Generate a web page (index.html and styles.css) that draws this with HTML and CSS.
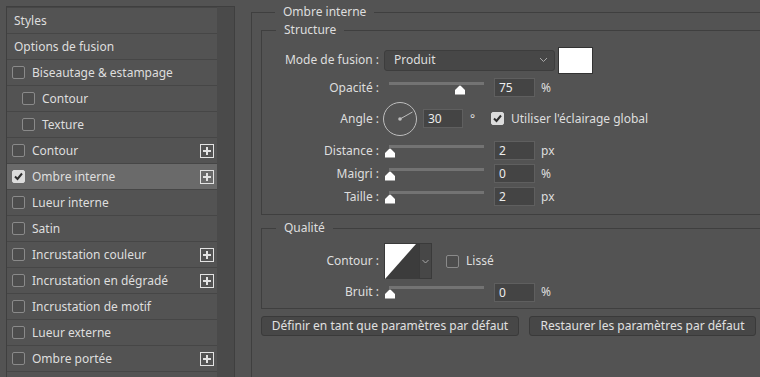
FILE: index.html
```html
<!DOCTYPE html>
<html>
<head>
    <meta charset="UTF-8">
    <title>Style de calque</title>
    <link rel="stylesheet" href="styles.css">
</head>
<body>
<div class="dialog">
    <aside class="sidebar">
        <ul class="styles-list">
            <li class="item heading">Styles</li>
            <li class="item heading">Options de fusion</li>
            <li class="item"><span class="box"></span>Biseautage &amp; estampage</li>
            <li class="item sub"><span class="box"></span>Contour</li>
            <li class="item sub"><span class="box"></span>Texture</li>
            <li class="item"><span class="box"></span>Contour
                <svg class="add" width="14" height="14" viewBox="0 0 14 14"><rect x="0.5" y="0.5" width="13" height="13" fill="none" stroke="#e2e2e2"/><rect x="3" y="6" width="8" height="2" fill="#e2e2e2"/><rect x="6" y="3" width="2" height="8" fill="#e2e2e2"/></svg></li>
            <li class="item active"><span class="box checked"><svg width="13" height="13" viewBox="0 0 13 13"><path d="M3 6.5 L5.5 9 L10 3.5" fill="none" stroke="#2e2e2e" stroke-width="2"/></svg></span>Ombre interne
                <svg class="add" width="14" height="14" viewBox="0 0 14 14"><rect x="0.5" y="0.5" width="13" height="13" fill="none" stroke="#e2e2e2"/><rect x="3" y="6" width="8" height="2" fill="#e2e2e2"/><rect x="6" y="3" width="2" height="8" fill="#e2e2e2"/></svg></li>
            <li class="item"><span class="box"></span>Lueur interne</li>
            <li class="item"><span class="box"></span>Satin</li>
            <li class="item"><span class="box"></span>Incrustation couleur
                <svg class="add" width="14" height="14" viewBox="0 0 14 14"><rect x="0.5" y="0.5" width="13" height="13" fill="none" stroke="#e2e2e2"/><rect x="3" y="6" width="8" height="2" fill="#e2e2e2"/><rect x="6" y="3" width="2" height="8" fill="#e2e2e2"/></svg></li>
            <li class="item"><span class="box"></span>Incrustation en dégradé
                <svg class="add" width="14" height="14" viewBox="0 0 14 14"><rect x="0.5" y="0.5" width="13" height="13" fill="none" stroke="#e2e2e2"/><rect x="3" y="6" width="8" height="2" fill="#e2e2e2"/><rect x="6" y="3" width="2" height="8" fill="#e2e2e2"/></svg></li>
            <li class="item"><span class="box"></span>Incrustation de motif</li>
            <li class="item"><span class="box"></span>Lueur externe</li>
            <li class="item"><span class="box"></span>Ombre portée
                <svg class="add" width="14" height="14" viewBox="0 0 14 14"><rect x="0.5" y="0.5" width="13" height="13" fill="none" stroke="#e2e2e2"/><rect x="3" y="6" width="8" height="2" fill="#e2e2e2"/><rect x="6" y="3" width="2" height="8" fill="#e2e2e2"/></svg></li>
        </ul>
        <div class="scrollbar"></div>
    </aside>

    <main class="settings">
        <fieldset class="group outer">
            <legend>Ombre interne</legend>

            <fieldset class="group structure">
                <legend>Structure</legend>

                <div class="row row-mode">
                    <span class="label">Mode de fusion :</span>
                    <div class="select">Produit
                        <svg class="chevron" width="9" height="6" viewBox="0 0 9 6"><path d="M1 1 L4.5 4.5 L8 1" fill="none" stroke="#a8a8a8"/></svg>
                    </div>
                    <div class="swatch"></div>
                </div>

                <div class="row row-slider row-opacity">
                    <span class="label">Opacité :</span>
                    <div class="slider"><div class="track"></div>
                        <svg class="thumb" style="left: 70px" width="12" height="10" viewBox="0 0 12 10"><path d="M6 0.5 Q6.6 0.5 7.2 1.2 L11 5 L11 9.5 L1 9.5 L1 5 L4.8 1.2 Q5.4 0.5 6 0.5 Z" fill="#fff"/></svg>
                    </div>
                    <div class="field">75</div>
                    <span class="unit">%</span>
                </div>

                <div class="row row-angle">
                    <span class="label">Angle :</span>
                    <svg class="dial" width="36" height="36" viewBox="0 0 36 36">
                        <circle cx="18" cy="18" r="16.5" fill="none" stroke="#bdbdbd"/>
                        <line x1="18" y1="18" x2="30.5" y2="11" stroke="#bdbdbd"/>
                        <circle cx="18" cy="18" r="1.8" fill="#bdbdbd"/>
                    </svg>
                    <div class="field field-angle">30</div>
                    <span class="unit degree">°</span>
                    <span class="box checked global"><svg width="13" height="13" viewBox="0 0 13 13"><path d="M3 6.5 L5.5 9 L10 3.5" fill="none" stroke="#2e2e2e" stroke-width="2"/></svg></span>
                    <span class="check-label">Utiliser l'éclairage global</span>
                </div>

                <div class="row row-slider">
                    <span class="label">Distance :</span>
                    <div class="slider"><div class="track"></div>
                        <svg class="thumb" style="left: 0px" width="12" height="10" viewBox="0 0 12 10"><path d="M6 0.5 Q6.6 0.5 7.2 1.2 L11 5 L11 9.5 L1 9.5 L1 5 L4.8 1.2 Q5.4 0.5 6 0.5 Z" fill="#fff"/></svg>
                    </div>
                    <div class="field">2</div>
                    <span class="unit">px</span>
                </div>

                <div class="row row-slider">
                    <span class="label">Maigri :</span>
                    <div class="slider"><div class="track"></div>
                        <svg class="thumb" style="left: 0px" width="12" height="10" viewBox="0 0 12 10"><path d="M6 0.5 Q6.6 0.5 7.2 1.2 L11 5 L11 9.5 L1 9.5 L1 5 L4.8 1.2 Q5.4 0.5 6 0.5 Z" fill="#fff"/></svg>
                    </div>
                    <div class="field">0</div>
                    <span class="unit">%</span>
                </div>

                <div class="row row-slider">
                    <span class="label">Taille :</span>
                    <div class="slider"><div class="track"></div>
                        <svg class="thumb" style="left: 0px" width="12" height="10" viewBox="0 0 12 10"><path d="M6 0.5 Q6.6 0.5 7.2 1.2 L11 5 L11 9.5 L1 9.5 L1 5 L4.8 1.2 Q5.4 0.5 6 0.5 Z" fill="#fff"/></svg>
                    </div>
                    <div class="field">2</div>
                    <span class="unit">px</span>
                </div>
            </fieldset>

            <fieldset class="group quality">
                <legend>Qualité</legend>

                <div class="row row-contour">
                    <span class="label">Contour :</span>
                    <div class="curve">
                        <svg width="34" height="35" viewBox="0 0 34 35"><rect width="34" height="35" fill="#3c3c3c"/><path d="M0 0 L31 0 L0 35 Z" fill="#fff"/></svg>
                        <span class="curve-drop"><svg width="7" height="5" viewBox="0 0 7 5"><path d="M0.5 1 L3.5 4 L6.5 1" fill="none" stroke="#a8a8a8"/></svg></span>
                    </div>
                    <span class="box smooth"></span>
                    <span class="check-label">Lissé</span>
                </div>

                <div class="row row-slider row-noise">
                    <span class="label">Bruit :</span>
                    <div class="slider"><div class="track"></div>
                        <svg class="thumb" style="left: 0px" width="12" height="10" viewBox="0 0 12 10"><path d="M6 0.5 Q6.6 0.5 7.2 1.2 L11 5 L11 9.5 L1 9.5 L1 5 L4.8 1.2 Q5.4 0.5 6 0.5 Z" fill="#fff"/></svg>
                    </div>
                    <div class="field">0</div>
                    <span class="unit">%</span>
                </div>
            </fieldset>

            <div class="actions">
                <button class="btn btn-default">Définir en tant que paramètres par défaut</button>
                <button class="btn btn-reset">Restaurer les paramètres par défaut</button>
            </div>
        </fieldset>
    </main>
</div>
</body>
</html>
```

FILE: styles.css
```css
* {
    box-sizing: border-box;
}
body {
    margin: 0;
    background-color: #535353;
    color: #dedede;
    font-family: "Noto Sans", sans-serif;
    font-size: 12px;
    line-height: 16px;
    overflow: hidden;
}
.dialog {
    display: flex;
    align-items: flex-start;
    padding: 4px 0 0 6px;
    height: 377px;
    overflow: hidden;
}

/* left list */
.sidebar {
    display: flex;
    width: 229px;
    height: 373px;
    margin-top: 2px;
    border: 1px solid #3f3f3f;
    border-bottom: none;
    flex-shrink: 0;
}
.styles-list {
    list-style: none;
    margin: 0;
    padding: 0;
    width: 210px;
    border-top: 1px solid #464646;
}
.item {
    display: flex;
    align-items: center;
    height: 26px;
    padding-left: 5px;
    border-bottom: 1px solid #464646;
}
.item.heading {
    padding-left: 7px;
}
.item.sub {
    padding-left: 15px;
}
.item.active {
    background-color: #6a6a6a;
}
.item .box {
    margin-right: 7px;
}
.add {
    margin-left: auto;
    margin-right: 3px;
}
.scrollbar {
    width: 17px;
    background-color: #4a4a4a;
}

/* checkbox */
.box {
    display: inline-flex;
    width: 13px;
    height: 13px;
    border: 1px solid #8a8a8a;
    border-radius: 2px;
    background-color: #4d4d4d;
    flex-shrink: 0;
}
.box.checked {
    background-color: #dcdcdc;
    border-color: #dcdcdc;
}
.box.checked svg {
    margin: -1px;
}

/* right settings */
.settings {
    flex: 1;
    margin-left: 16px;
}
.group {
    margin: 0;
    min-width: 0;
    border: 1px solid #3f3f3f;
    border-right: none;
}
.group legend {
    margin-left: 14px;
    padding: 0 8px;
    line-height: 16px;
}
.outer {
    height: 380px;
    border-bottom: none;
    padding: 2px 0 0 9px;
}
.structure {
    padding: 8px 0 6px 0;
}
.quality {
    margin-top: 5px;
    padding: 7px 0 6px 0;
}

.row {
    display: flex;
    align-items: center;
}
.label {
    width: 117px;
    margin-right: 5px;
    text-align: right;
    flex-shrink: 0;
}
.row-mode {
    height: 28px;
}
.row-slider {
    height: 23px;
}
.row-slider.row-opacity {
    height: 27px;
}
.row-angle {
    height: 35px;
    margin-bottom: 3px;
}
.row-contour {
    height: 36px;
    margin-bottom: 3px;
}
.row-slider.row-noise {
    height: 20px;
}

.select {
    display: flex;
    align-items: center;
    width: 171px;
    height: 21px;
    padding: 0 6px 0 9px;
    background-color: #474747;
    border: 1px solid #3d3d3d;
    border-radius: 3px;
}
.chevron {
    margin-left: auto;
}
.swatch {
    width: 35px;
    height: 27px;
    margin-left: 3px;
    background-color: #fff;
    border: 1px solid #333;
}

.slider {
    position: relative;
    width: 100px;
    height: 20px;
    flex-shrink: 0;
}
.slider .track {
    position: absolute;
    left: 5px;
    top: 4px;
    width: 95px;
    height: 3px;
    background-color: #737373;
}
.slider .thumb {
    position: absolute;
    top: 7px;
}

.field {
    width: 41px;
    height: 19px;
    margin-left: 10px;
    padding-left: 4px;
    background-color: #444;
    border: 1px solid #5f5f5f;
    color: #ececec;
    line-height: 17px;
}
.unit {
    margin-left: 6px;
}

.dial {
    margin-left: -2px;
}
.field-angle {
    width: 40px;
    margin-left: 5px;
}
.degree {
    margin-left: 7px;
    width: 14px;
}
.global {
    margin-left: 7px;
}
.check-label {
    margin-left: 7px;
}

.curve {
    display: flex;
    height: 36px;
    border: 1px solid #3a3a3a;
}
.curve svg {
    display: block;
}
.curve-drop {
    display: flex;
    align-items: center;
    justify-content: center;
    width: 12px;
    background-color: #474747;
    border-left: 1px solid #3a3a3a;
}
.smooth {
    margin-left: 14px;
}

.actions {
    display: flex;
    gap: 10px;
    margin-top: 7px;
}
.btn {
    height: 20px;
    padding: 0;
    background-color: #474747;
    border: 1px solid #3a3a3a;
    border-radius: 3px;
    color: #e0e0e0;
    font-family: "Noto Sans", sans-serif;
    font-size: 12px;
    line-height: 16px;
}
.btn-default {
    width: 258px;
}
.btn-reset {
    width: 227px;
}
```
